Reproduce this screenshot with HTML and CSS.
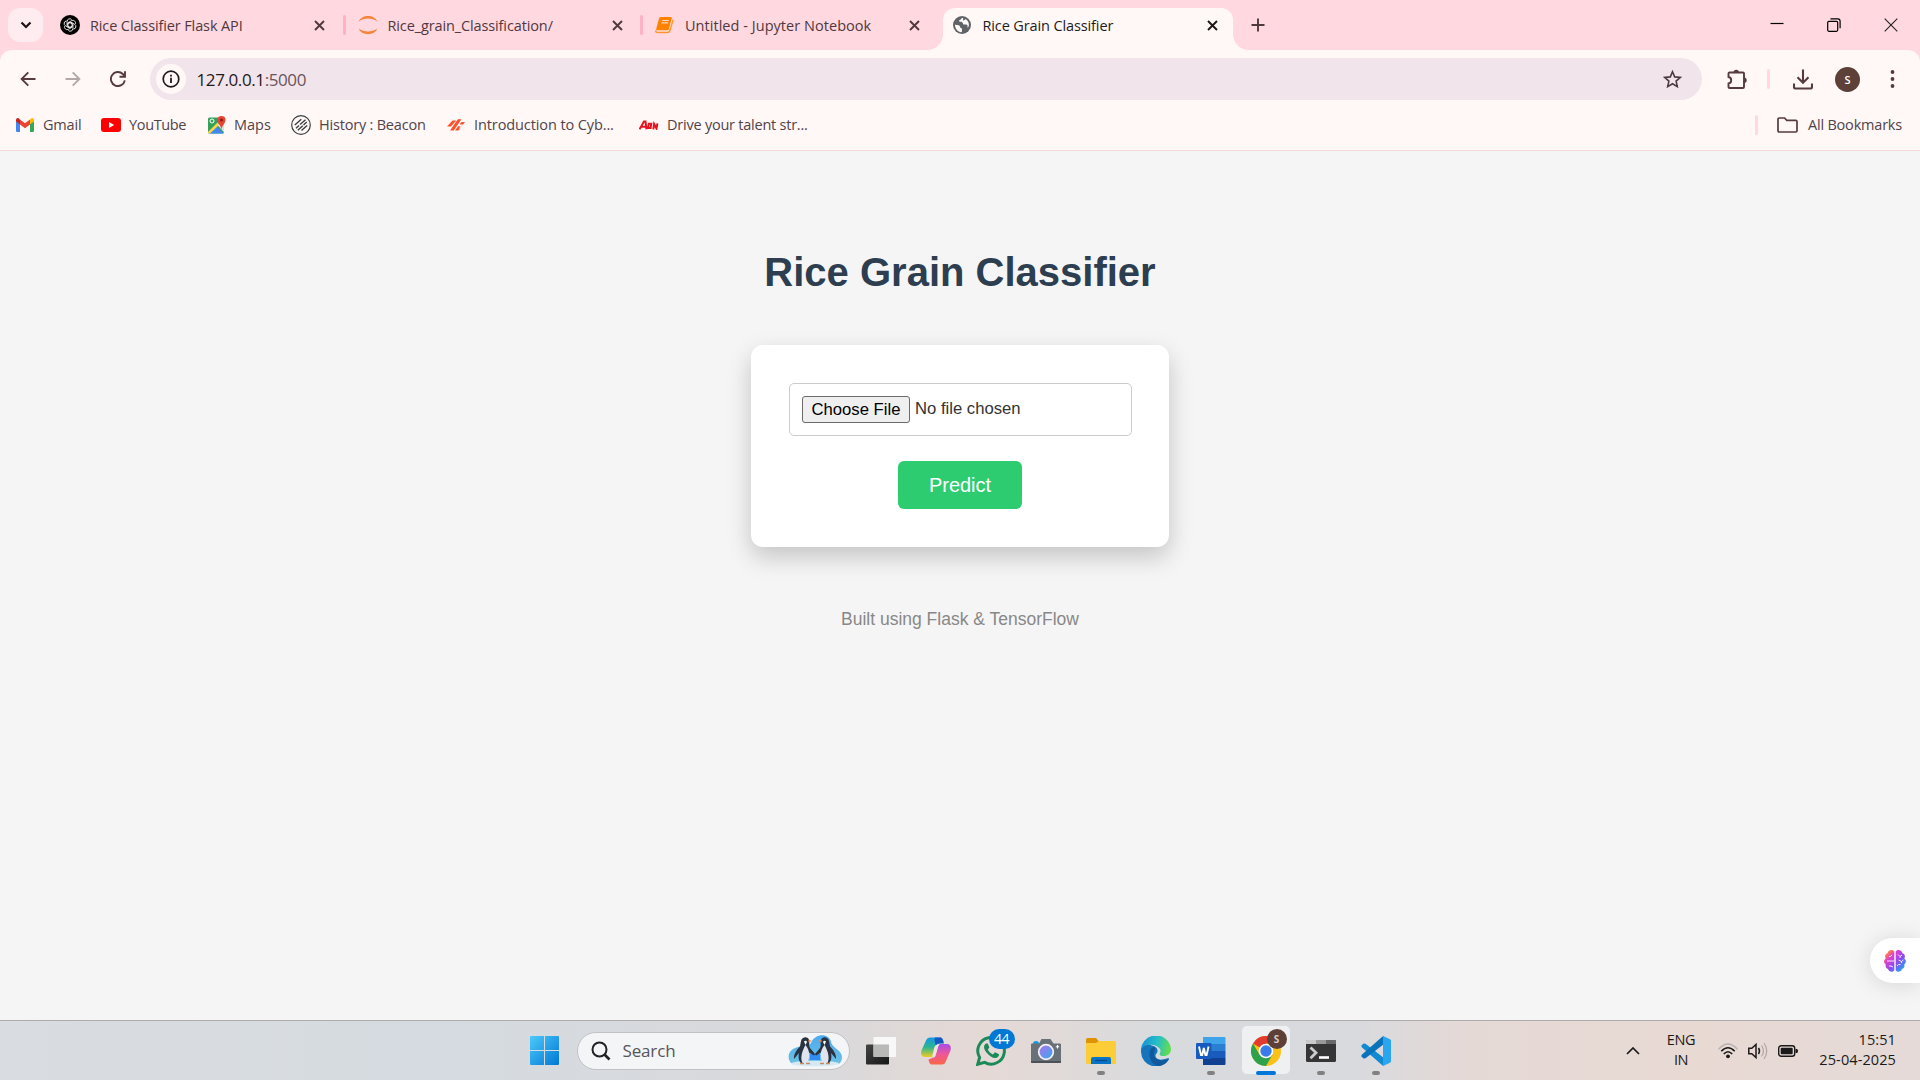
FILE: index.html
```html
<!DOCTYPE html>
<html lang="en">
<head>
<meta charset="utf-8">
<title>Rice Grain Classifier</title>
<link rel="stylesheet" href="styles.css">
</head>
<body>
<div class="screen">
  <header class="tabstrip">
    <div class="tab-search"><svg width="12" height="8" viewBox="0 0 12 8"><path d="M1.500 1.500 6 6l4.500-4.500" fill="none" stroke="#1f1416" stroke-width="2.200"/></svg></div>
    <div class="tab">
      <svg class="favicon" width="20" height="20" viewBox="0 0 20 20"><circle cx="10" cy="10" r="10" fill="#000"/><g fill="none" stroke="#fff" stroke-width=".8"><path id="petal" d="M8 12.500V7.800l3.600-2.100a2.600 2.600 0 0 1 3.700 3.300"/><use href="#petal" transform="rotate(60 10 10)"/><use href="#petal" transform="rotate(120 10 10)"/><use href="#petal" transform="rotate(180 10 10)"/><use href="#petal" transform="rotate(240 10 10)"/><use href="#petal" transform="rotate(300 10 10)"/></g></svg>
      <span class="tab-title t1">Rice Classifier Flask API</span>
      <svg class="close" width="11" height="11" viewBox="0 0 11 11"><path d="m1 1 9 9M10 1l-9 9"/></svg>
      <i class="sep"></i>
    </div>
    <div class="tab">
      <svg class="favicon" width="20" height="20" viewBox="0 0 20 20"><path d="M.8 6.500C3-1 17-1 19.200 6.500 15 2.600 5 2.600.8 6.500ZM.8 13.500C3 21 17 21 19.200 13.500 15 17.400 5 17.400.8 13.500Z" fill="#f5833a"/></svg>
      <span class="tab-title t2">Rice_grain_Classification/</span>
      <svg class="close" width="11" height="11" viewBox="0 0 11 11"><path d="m1 1 9 9M10 1l-9 9"/></svg>
      <i class="sep"></i>
    </div>
    <div class="tab">
      <svg class="favicon" width="20" height="20" viewBox="0 0 20 20"><path d="M5.500 2h10.300q1.300.2.900 1.800L14 14.200q-.5 1.300-1.800 1.300H2q-1.200-.3-.8-1.600L4 3.500Q4.400 2.200 5.500 2Z" fill="#ff8100"/><path d="M7.200 5.500h6.500M6.600 7.800h6.500" stroke="#ffd9c0" stroke-width="1.200"/><path d="M.8 15.500q0 2 1.600 2h10.400q1.500 0 2-1.700L18 4.800" fill="none" stroke="#ff9633" stroke-width="1.600"/><path d="M1.500 15.800h10.800q1.400 0 1.900-1.500L17 4" fill="none" stroke="#ffe0cc" stroke-width=".7"/></svg>
      <span class="tab-title t3">Untitled - Jupyter Notebook</span>
      <svg class="close" width="11" height="11" viewBox="0 0 11 11"><path d="m1 1 9 9M10 1l-9 9"/></svg>
    </div>
    <div class="tab active">
      <svg class="favicon" width="18" height="18" viewBox="0 0 18 18"><circle cx="9" cy="9" r="9" fill="#5f6368"/><path d="M2 8.500c1.500.8 3.500.2 4.500 1.200 1.200 1 .2 2 1.500 2.400 1 .4 1.300 1 .9 2.200v1.800C5 16.500 1.800 12.500 2 8.500ZM9.200 1.900c-1.300.6-1 1.400-2 1.800-1.200.5-1.300.9-.8 1.800.6.800 2.200.2 3 .9.900.8.300 1.700 1.400 2 1.200.4 2.600-.3 3.400.7.700.8.200 2.100.6 3C17.200 8.500 15.500 4.600 12.500 2.900c-.4 1.200-1.800 1-2.200 1.800-.9-.7.500-1.700-.3-2.800Z" fill="#fff8f7"/></svg>
      <span class="tab-title t4">Rice Grain Classifier</span>
      <svg class="close" width="11" height="11" viewBox="0 0 11 11"><path d="m1 1 9 9M10 1l-9 9"/></svg>
    </div>
    <svg class="newtab" width="14" height="14" viewBox="0 0 14 14"><path d="M7 .5v13M.5 7h13" stroke="#4f383e" stroke-width="1.900"/></svg>
    <div class="window-buttons">
      <svg width="14" height="14" viewBox="0 0 14 14"><path d="M.5 5.500h13" stroke="#000" stroke-width="1.200"/></svg>
      <svg width="14" height="14" viewBox="0 0 14 14" fill="none" stroke="#000" stroke-width="1.200"><rect x=".7" y="3.300" width="10" height="10" rx="1.200"/><path d="M3.500.9h7.300q2.300 0 2.300 2.300v7"/></svg>
      <svg width="14" height="14" viewBox="0 0 14 14"><path d="m.7.700 12.600 12.600M13.300.700.7 13.300" stroke="#222" stroke-width="1.100"/></svg>
    </div>
  </header>

  <div class="toolbar-back"><nav class="toolbar">
    <div class="nav-buttons">
      <svg width="16" height="16" viewBox="0 0 16 16"><path d="M15.500 8H2M8.300 1.300 1.600 8l6.700 6.700" fill="none" stroke="#573a41" stroke-width="1.900"/></svg>
      <svg width="16" height="16" viewBox="0 0 16 16"><path d="M.5 8H14M7.700 1.300 14.400 8l-6.700 6.700" fill="none" stroke="#b3a7a9" stroke-width="1.900"/></svg>
      <svg width="16" height="16" viewBox="0 0 16 16"><path d="M14.800 9.300A7 7 0 1 1 12.800 3l2.100 2.200M15 .3v5.400H9.500" fill="none" stroke="#573a41" stroke-width="1.900"/></svg>
    </div>
    <div class="omnibox">
      <div class="site-info"><svg width="18" height="18" viewBox="0 0 18 18"><circle cx="9" cy="9" r="7.800" fill="none" stroke="#1f1a1c" stroke-width="1.700"/><path d="M9 7.800V13M9 4.800v1.800" stroke="#1f1a1c" stroke-width="1.800"/></svg></div>
      <span class="url"><b>127.0.0.1</b>:5000</span>
      <svg class="star" width="19" height="18" viewBox="0 0 19 18"><path d="m9.500 1.700 2.200 5.200 5.600.5-4.200 3.700 1.200 5.500-4.800-2.900-4.800 2.900 1.200-5.500L1.700 7.400l5.600-.5Z" fill="none" stroke="#4b3b40" stroke-width="1.600"/></svg>
    </div>
    <svg class="ext" width="22" height="21" viewBox="0 0 22 21"><path d="M3.500 3.500H17q1 0 1 1V18q0 1-1 1H3.500q-1 0-1-1v-3.500q2.700-.3 2.700-3.200T2.500 8V4.500q0-1 1-1Z" fill="none" stroke="#573a41" stroke-width="1.900"/><path d="M7.500 3.500a2.700 2.700 0 0 1 5.400 0ZM18 8.500a2.700 2.700 0 0 1 0 5.400Z" fill="#573a41"/></svg>
    <i class="sep pale"></i>
    <svg class="download" width="20" height="21" viewBox="0 0 20 21" fill="none" stroke="#573a41" stroke-width="2.100"><path d="M10 .5v12.800M4.500 8.300l5.500 5.500 5.500-5.500M1 14.500v3.500q0 1.500 1.500 1.500h15q1.500 0 1.500-1.500v-3.500"/></svg>
    <div class="avatar">S</div>
    <svg class="dots" width="5" height="18" viewBox="0 0 5 18" fill="#573a41"><circle cx="2.500" cy="2" r="1.900"/><circle cx="2.500" cy="9" r="1.900"/><circle cx="2.500" cy="16" r="1.900"/></svg>
  </nav></div>

  <nav class="bookmarks">
    <div class="bm b1"><svg width="18" height="14" viewBox="0 0 18 14"><path d="M0 3v9.800Q0 14 1.200 14H4V5.500Z" fill="#4285f4"/><path d="M18 3v9.800q0 1.200-1.200 1.200H14V5.500Z" fill="#34a853"/><path d="M14 1.500V6.300L18 3.500V2q0-2-2-2-1 0-2 1.500Z" fill="#fbbc04"/><path d="M4 1.500 9 5.200l5-3.700v5L9 10.200l-5-3.700Z" fill="#ea4335"/><path d="M0 2v1.500l4 2.900V1.500Q3 0 2 0 0 0 0 2Z" fill="#c5221f"/></svg><span>Gmail</span></div>
    <div class="bm b2"><svg width="20" height="14" viewBox="0 0 20 14"><rect width="20" height="14" rx="3" fill="#f00"/><path d="M8 4v6l5.200-3Z" fill="#fff"/></svg><span>YouTube</span></div>
    <div class="bm b3"><svg width="18" height="18" viewBox="0 0 18 18"><rect y="1.500" width="16" height="16" rx="1.500" fill="#34a058"/><path d="m1 17.500 7.500-7.500 7 7.500Z" fill="#4285f4"/><path d="M0 16 9.500 6.500l2 2L2 17.500H1Q0 17 0 16Z" fill="#fdd445"/><path d="m9.500 9 6.500-4v11.500Z" fill="#ddd"/><circle cx="4" cy="5" r="2" fill="none" stroke="#fff"/><path d="M13.500 13.500C13 9 9.500 7.500 9.500 4a4 4 0 0 1 8 0c0 3.500-3.500 5-4 9.500Z" fill="#e94335"/><circle cx="13.500" cy="4" r="1.500" fill="#8c1c14"/></svg><span>Maps</span></div>
    <div class="bm b4"><svg width="20" height="20" viewBox="0 0 20 20" fill="none" stroke="#3b3f42"><circle cx="10" cy="10" r="9.300" stroke-width="1.200"/><path d="m3.800 10 6.500-5.800M5 13.200l3-2.700M9 9.600l5.500-4.900M6.800 15.300l5-4.500M12.500 10l3.200-2.900M10.500 15.500l5.600-5" stroke-width="1.400"/></svg><span>History : Beacon</span></div>
    <div class="bm b5"><svg width="18" height="12" viewBox="0 0 18 12" fill="#f9532d"><path d="M0 7.500 5.500 1.500h3.800L4 7.500ZM3 11.500 10.800.3h3.700L6.700 11.500ZM8 11.500l3-4.200h2.500l-1.500 2.200h.8l3.200-4H12.500l2-2.500H18L11.500 11.500Z"/></svg><span>Introduction to Cyb...</span></div>
    <div class="bm b6"><svg width="20" height="10" viewBox="0 0 20 10" fill="none" stroke="#e3131f" stroke-width="2"><path d="M.5 9.300 5 1.500h1.500l1 7.800M2.500 6.800h5M9.800 3.800h2.500l-.7 4.200H9ZM14.300 9.300l.8-5.300 2.400 4.500.9-5.200"/></svg><span>Drive your talent str...</span></div>
    <i class="sep pale"></i>
    <div class="bm all"><svg width="21" height="16" viewBox="0 0 21 16"><path d="M1 2.200Q1 1 2.200 1h5.300l2.300 2.300h9Q20 3.300 20 4.500v9.300q0 1.200-1.200 1.200H2.200Q1 15 1 13.800Z" fill="none" stroke="#573a41" stroke-width="1.700"/></svg><span>All Bookmarks</span></div>
  </nav>

  <main class="page">
    <h1>Rice Grain Classifier</h1>
    <form class="card" onsubmit="return false">
      <div class="file-input"><button type="button" class="choose">Choose File</button><span>No file chosen</span></div>
      <button class="predict">Predict</button>
    </form>
    <footer>Built using Flask &amp; TensorFlow</footer>
    <div class="assistant"><svg width="24" height="24" viewBox="0 0 24 24"><defs><linearGradient id="br" x1="0" y1="0" x2="1" y2="1"><stop offset="0" stop-color="#ffb01f"/><stop offset=".12" stop-color="#ff8a3c"/><stop offset=".32" stop-color="#e03ed0"/><stop offset=".58" stop-color="#8a4df0"/><stop offset=".9" stop-color="#1fa8f5"/></linearGradient></defs><path d="M11.300 2.500C9-.2 5 1.200 4.500 4.300 2 5 1.500 8 2.700 9.400c-2.300 1.800-2 4.600 0 5.600C2 18 3.500 19.500 5 20c1 3.200 4.500 3.500 6.300 1.500ZM12.700 2.500C15-.2 19 1.200 19.500 4.300 22 5 22.500 8 21.300 9.400c2.300 1.800 2 4.600 0 5.600.7 3-.8 4.500-2.300 5-1 3.200-4.500 3.500-6.300 1.500Z" fill="url(#br)"/><path d="M4 12h7M6 7.500q2 .5 3-1.500M6 17q2-.5 4 1M14 17q1-2 3.500-1.500M15 5.500l2 2 2-1.500M17 7.500V9M15.500 11l3 1.500 2-1.500M18.500 12.500V14" fill="none" stroke="#f7e9ff" stroke-width="1"/></svg></div>
  </main>

  <footer class="taskbar">
    <div class="apps">
      <div class="app start"><svg width="29" height="29" viewBox="0 0 29 29"><defs><linearGradient id="wn" x1="0" y1="0" x2="1" y2="1"><stop offset="0" stop-color="#4cc9fb"/><stop offset="1" stop-color="#0078d4"/></linearGradient></defs><path d="M1 0h13v14H0V1Q0 0 1 0ZM15 0h13q1 0 1 1v13H15ZM0 15h14v14H1q-1 0-1-1ZM15 15h14v13q0 1-1 1H15Z" fill="url(#wn)"/></svg></div>
      <div class="search">
        <svg width="20" height="20" viewBox="0 0 20 20" fill="none" stroke="#222"><circle cx="8.500" cy="8.500" r="7" stroke-width="2"/><path d="m13.500 13.500 5 5" stroke-width="2.600"/></svg>
        <span>Search</span>
        <svg class="penguins" width="54" height="32" viewBox="0 0 54 32"><defs><linearGradient id="pg" x1="0" y1="0" x2="0" y2="1"><stop offset="0" stop-color="#4cabf2"/><stop offset="1" stop-color="#6cc0e4"/></linearGradient></defs><path d="M3 28C-2 22 1 14 10 12 14 10 20 13 23 8 27-2 41-2 43 7c1 4 5 6 8 9 4 4 4 9 0 13Z" fill="url(#pg)"/><path d="M22 19h10v6H22Z" fill="#2e8cf4"/><ellipse cx="27" cy="28.500" rx="24" ry="2.800" fill="#d3eaf5"/><g id="peng"><path d="M13 6c1-4 6-5 8-1.500C22 8 20.500 10 22 13l5 6-1 1.500-5-3c.5 5-1 8.500-3.500 10.500H13c-2-2-3-5-2-10l-5 6C5.500 18.500 9.500 14 12 11.500Z" fill="#2a3342"/><path d="M17.500 10c3 4 4.500 8 3.500 13-.5 3-1.500 4.500-3 5h-3.500c-2.500-5-.5-12 3-18Z" fill="#dfe4ee"/><path d="M16 6.500q2-1.500 3 .5L17.500 10Z" fill="#fff"/><path d="m20.500 4.500 3.500 1.500-3.500 1.300Z" fill="#e88b4e"/><path d="M12 28.500h4M18 28.500h4" stroke="#c98a60" stroke-width="1.400"/></g><use href="#peng" transform="matrix(-1 0 0 1 54 0)"/></svg>
      </div>
      <div class="app tv"><svg width="30" height="30" viewBox="0 0 30 30"><defs><linearGradient id="tk" x1="0" y1="0" x2="1" y2="1"><stop offset="0" stop-color="#444"/><stop offset="1" stop-color="#161616"/></linearGradient></defs><rect y="8.500" width="23" height="20" rx="1" fill="url(#tk)"/><rect x="7.500" y="1" width="22.500" height="20" rx="1" fill="#fbfbfb" opacity=".92"/><path d="M7.500 8.500H23V21H7.500Z" fill="#b9b9b8"/></svg></div>
      <div class="app"><svg width="30" height="30" viewBox="0 0 30 30"><defs><linearGradient id="c1" x1="0" y1="0" x2="0" y2="1"><stop offset="0" stop-color="#1597e8"/><stop offset=".5" stop-color="#2cb68d"/><stop offset="1" stop-color="#f0cc22"/></linearGradient><linearGradient id="c2" x1="0" y1="0" x2="0" y2="1"><stop offset="0" stop-color="#a84be8"/><stop offset=".5" stop-color="#ee5898"/><stop offset="1" stop-color="#fa6848"/></linearGradient></defs><path d="M9 1.500h10c2 0 3 2 3.500 4.500L15 9c-1.500 6-2 11-4 12H4c-3.500 0-4.500-3-3.500-6.500L5 4.500C6 2.500 7 1.500 9 1.500Z" fill="url(#c1)"/><path d="M14 1.500h5c2.500 0 3 2.500 4 6h-5c-2 0-2 1-3 3-1-4-2-8-1-9Z" fill="#1557c5"/><path d="M21 28.500H11c-2 0-3-2-3.500-5L14 21c2-6 2-11 5-13h7c3.500 0 4.500 3 3.500 6.500L25 25c-1 2.500-2 3.500-4 3.500Z" fill="url(#c2)"/><path d="M13.500 11c1-2 2-2.500 4.500-2.500-1.500 3-2 8-4 12h-3c1.500-4 1.500-7 2.500-9.500Z" fill="#eee4e3"/></svg></div>
      <div class="app"><svg width="30" height="30" viewBox="0 0 30 30"><path d="m1.700 28.300 1.900-6.800a13.300 13.300 0 1 1 5 4.900Z" fill="none" stroke="#1c8a58" stroke-width="3"/><path d="M10 7.500c-3 2-2.200 5.500.5 9 3 3.800 6.500 6 9.500 5.500 2.500-.8 3.200-2.600 3-3.700l-4-2-2.200 2.200c-2-.8-4-2.700-5-4.900l1.600-2-1.600-4Z" fill="#1c8a58"/></svg><span class="badge">44</span></div>
      <div class="app"><svg width="30" height="30" viewBox="0 0 30 30"><defs><linearGradient id="cm" x1="0" y1="0" x2="1" y2="1"><stop offset="0" stop-color="#b372e8"/><stop offset="1" stop-color="#30aaf2"/></linearGradient></defs><path d="M2 8q0-3 3-3t3 3Z" fill="#1499dc"/><path d="M8 7.500 10.500 3h9l3 4.500H29q1 0 1 1V26q0 1-1 1H1q-1 0-1-1V8.500q0-1 1-1Z" fill="#687078"/><path d="M0 25h30v1q0 1-1 1H1q-1 0-1-1Z" fill="#4b5157"/><circle cx="15" cy="16" r="7.300" fill="url(#cm)" stroke="#f3f0fa" stroke-width="1.700"/><path d="M26.500 9v3.400M24.800 10.700h3.400" stroke="#fff" stroke-width="1.100"/></svg></div>
      <div class="app running"><svg width="30" height="30" viewBox="0 0 30 30"><path d="M0 3.500Q0 2 1.500 2H10l3 3.500V9H0Z" fill="#dd9400"/><path d="M0 7h10l3-2h15.500Q30 5 30 6.500v20q0 1.500-1.500 1.500h-27Q0 28 0 26.500Z" fill="#fdcd38"/><path d="M5 28v-5q0-2 2-2h16q2 0 2 2v5Z" fill="#0874c6"/><path d="M9 24.500h12" stroke="#054e94" stroke-width="1.500"/></svg></div>
      <div class="app"><svg width="30" height="30" viewBox="0 0 30 30"><defs><linearGradient id="eg" x1="0" y1=".2" x2="1" y2=".4"><stop offset="0" stop-color="#168ed4"/><stop offset=".55" stop-color="#27bfc7"/><stop offset="1" stop-color="#62dc50"/></linearGradient></defs><path d="M0 16A15 15 0 0 1 30 13c0 5-4 7.500-8 7-3 0-4-1.300-3-3 1-2 .5-4-1-5C12 6 2 9 0 16Z" fill="url(#eg)"/><path d="M0 16C0 10 6 8 11 9.500c5 1 7 5 4.500 8-3 3 1 7 6 6 4-.8 7-2 6.500-.5A15 15 0 0 1 0 16Z" fill="#1574bb"/><path d="M12 11C6 14 8 28 17 30c5 0 9-3 11-7-7 3-14 1-15-4-.5-3 1-5 1.500-7Z" fill="#10599c"/></svg></div>
      <div class="app running"><svg width="30" height="30" viewBox="0 0 30 30"><path d="M7 1h21.500q1 0 1 1v6H7Z" fill="#40a4ea"/><path d="M7 8h22.500v7H7Z" fill="#2b7fd3"/><path d="M7 15h22.500v7H7Z" fill="#195abd"/><path d="M7 22h22.500v6q0 1-1 1H7Z" fill="#113f92"/><rect y="7" width="15.500" height="16" rx="1" fill="#185abd"/><path d="m3 10.500 2 8.500h1.200l1.600-7 1.600 7h1.200l2-8.500" fill="none" stroke="#fff" stroke-width="1.900"/></svg></div>
      <div class="app current"><svg width="30" height="30" viewBox="0 0 30 30"><circle cx="15" cy="15" r="15" fill="#fbc116"/><path d="M15 15 2 7.500A15 15 0 0 1 28 7.500H15Z" fill="#e33b2e"/><path d="M2 7.500A15 15 0 0 0 15 30l6.500-11.300L15 15 8.500 18.700Z" fill="#2da14c"/><circle cx="15" cy="15" r="7.300" fill="#fff"/><circle cx="15" cy="15" r="5.700" fill="#387cea"/></svg><span class="profile">S</span></div>
      <div class="app running"><svg width="30" height="30" viewBox="0 0 30 30"><rect y="4" width="30" height="22" rx="1.500" fill="#353535"/><path d="M1 4h9v4H0V5q0-1 1-1Z" fill="#c9c9c9"/><path d="M10 4h10v4H10Z" fill="#999"/><path d="M20 4h9q1 0 1 1v3H20Z" fill="#686868"/><path d="m4.500 11.500 5.500 5.300-5.500 5.400" fill="none" stroke="#ccc" stroke-width="2.800"/><path d="M13 21.500h10" stroke="#fff" stroke-width="2.600"/></svg></div>
      <div class="app running"><svg width="30" height="30" viewBox="0 0 30 30"><path d="M.5 9.500 2.500 7.500 4.500 7.700 23 22v7.500L21.500 29.500.5 11Z" fill="#118ad4"/><path d="M.5 20.500 2.500 22.500 4.500 22.300 23 8V.500H21.500L.5 19Z" fill="#0873bb"/><path d="m22 0 7 3.300q1 .5 1 1.700v20q0 1.200-1 1.700L22 30Z" fill="#2aa5f0"/></svg></div>
    </div>
    <div class="tray">
      <svg class="chev" width="14" height="8" viewBox="0 0 14 8"><path d="m1 7 6-6 6 6" fill="none" stroke="#1a1a1a" stroke-width="1.700"/></svg>
      <div class="lang">ENG<br>IN</div>
      <svg class="wifi" width="20" height="16" viewBox="0 0 20 16" fill="none" stroke="#1a1a1a" stroke-width="1.600"><path d="M.6 6.300q9.400-10.600 18.800 0" stroke="#b9b0ae" stroke-width="1.300"/><path d="M3.300 8.300q6.700-7 13.400 0M5.800 11q4.200-4.500 8.400 0"/><circle cx="10" cy="13.300" r="1.900" fill="#1a1a1a" stroke="none"/></svg>
      <svg class="vol" width="20" height="18" viewBox="0 0 20 18" fill="none" stroke="#1a1a1a" stroke-width="1.500"><path d="M.8 6.200h3L8 2.500v13l-4.200-3.700h-3Z"/><path d="M10.500 6q2 3 0 6"/><path d="M13.500 3.500q4 5.500 0 11M16 1q5.500 8 0 16" stroke="#b0a7a5" stroke-width="1.200"/></svg>
      <svg class="bat" width="20" height="12" viewBox="0 0 20 12"><rect x=".7" y=".7" width="16" height="10.600" rx="2.500" fill="none" stroke="#1a1a1a" stroke-width="1.400"/><rect x="2.700" y="2.700" width="12" height="6.600" rx="1" fill="#1a1a1a"/><path d="M17.500 4h1.300q1.200 0 1.200 2t-1.200 2h-1.300Z" fill="#1a1a1a"/></svg>
      <div class="clock">15:51<br>25-04-2025</div>
    </div>
  </footer>
</div>
</body>
</html>
```
FILE: styles.css
```css
* { box-sizing: border-box; }
body { margin: 0; overflow: hidden; font-family: "Open Sans", "Noto Sans", sans-serif; }
svg { display: block; flex: none; }
button { font-family: inherit; }
.screen { width: 1920px; height: 1080px; display: flex; flex-direction: column; background: #f5f5f5; }

.tabstrip { height: 50px; flex: none; display: flex; background: #ffd8e0; font-size: 14.500px; color: #51383e; }
.tab-search { width: 35px; height: 34px; margin: 8px 5px 0 8px; border-radius: 12px; background: #ffecf0; display: grid; place-items: center; }
.tab { position: relative; width: 297.500px; flex: none; height: 50px; display: flex; align-items: center; padding-left: 12px; }
.favicon { width: 20px; margin-right: 10px; }
.tab-title { width: 224px; white-space: nowrap; line-height: 20px; padding-top: 1px; letter-spacing: -.12px; }
.t3 { letter-spacing: .04px; }
.close { stroke: #51383e; stroke-width: 1.900; }
.sep { width: 3px; height: 20px; border-radius: 2px; background: #ffb1c5; flex: none; }
.tab .sep { margin-left: auto; margin-right: 0; }
.tab.active { width: 290px; height: 42px; margin: 8px 0 0 2px; padding: 0 0 8px 10px; background: #fff8f7; border-radius: 12px 12px 0 0; color: #1f1a1c; }
.tab.active .favicon { width: 18px; margin-right: 12px; }
.tab.active .tab-title { width: 224px; }
.tab.active .close { stroke: #1f1416; }
.tab.active::before, .tab.active::after { content: ""; position: absolute; bottom: 0; width: 15px; height: 15px; }
.tab.active::before { left: -15px; background: radial-gradient(circle at 0 0, transparent 14.500px, #fff8f7 15px); }
.tab.active::after { right: -15px; background: radial-gradient(circle at 100% 0, transparent 14.500px, #fff8f7 15px); }
.newtab { margin: 18px 0 0 18px; }
.window-buttons { margin: 18px 22px 0 auto; display: flex; gap: 43px; }

.toolbar-back { background: #ffd8e0; flex: none; }
.toolbar { height: 58px; display: flex; align-items: center; background: #fff8f7; border-radius: 12px 12px 0 0; }
.nav-buttons { width: 150px; display: flex; gap: 29px; padding-left: 20px; }
.omnibox { width: 1552px; height: 42px; border-radius: 21px; background: #f1e4eb; display: flex; align-items: center; padding: 0 20px 0 6px; }
.site-info { width: 30px; height: 30px; border-radius: 50%; background: #fff8f7; display: grid; place-items: center; }
.url { margin-left: 10.500px; font-size: 17px; color: #6a555b; white-space: nowrap; letter-spacing: -.4px; }
.url b { font-weight: 400; color: #1f1a1c; }
.star { margin-left: auto; }
.ext { margin-left: 24px; }
.sep.pale { background: #ffd8e0; }
.toolbar .sep { margin: 0 22.500px 0 19px; }
.avatar { width: 25px; height: 25px; margin-left: 22.500px; border-radius: 50%; background: #5d4037; color: #fff; font: 600 11px/25px "Open Sans", sans-serif; text-align: center; }
.dots { margin-left: 30px; }

.bookmarks { height: 43px; flex: none; display: flex; align-items: center; background: #fff8f7; border-bottom: 1px solid #f6d9dc; padding: 0 18px 9px 16px; font-size: 14.500px; color: #51434a; letter-spacing: -.2px; }
.bm { display: flex; align-items: center; gap: 8px; white-space: nowrap; line-height: 20px; flex: none; }
.b1 { width: 85px; }
.b2 { width: 107px; letter-spacing: -.35px; }
.b3 { width: 83px; letter-spacing: 0; }
.b4 { width: 156px; }
.b5 { width: 192px; letter-spacing: -.1px; }
.b5 span { margin-left: 1px; }
.b6 { letter-spacing: -.23px; }
.b1 span { margin-left: 1px; }
.bookmarks .sep { margin-left: auto; }
.all { margin-left: 19px; gap: 10px; }

.page { position: relative; height: 869px; display: flex; flex-direction: column; align-items: center; font-family: "Liberation Sans", Arial, sans-serif; color: #333; }
h1 { margin: 98px 0 0; font-size: 40px; line-height: 46px; color: #2c3e50; }
.card { width: 418px; height: 202px; margin-top: 50px; padding: 38px 37px 0 37px; border-radius: 12px; background: #fff; box-shadow: 0 10px 25px rgba(0,0,0,.2); display: flex; flex-direction: column; align-items: center; }
.file-input { width: 343px; height: 53px; margin-left: 1px; border: 1px solid #ccc; border-radius: 5px; display: flex; align-items: center; padding-left: 12px; font-size: 16.670px; }
.choose { width: 108px; height: 27px; padding: 0; border: 1px solid #6b6b6b; border-radius: 3px; background: #efefef; color: #000; font-size: 16.670px; }
.file-input span { margin: -2px 0 0 5px; }
.predict { width: 124px; height: 48px; margin-top: 25px; border: 0; border-radius: 6px; background: #2ecc71; color: #fff; font-size: 20px; }
.page footer { margin-top: 62px; font-size: 17.500px; line-height: 21px; color: #888; }
.assistant { position: absolute; right: 0; top: 787px; width: 50px; height: 45px; border-radius: 23px 0 0 23px; background: #fff; box-shadow: 0 2px 22px rgba(0,0,0,.13); display: flex; align-items: center; padding-left: 13px; }

.taskbar { height: 60px; flex: none; display: flex; justify-content: space-between; border-top: 1px solid #aeabad; background: linear-gradient(90deg, #d9dce0 0, #d5dbe0 450px, #dad9db 830px, #e5d9d6 980px, #e0dad9 1070px, #d8dbde 1160px, #d8dade 1350px, #e5d9d6 1470px, #e8d9d3 1700px, #e5dad8 1920px); }
.apps { display: flex; align-items: center; padding-left: 517px; }
.app { position: relative; width: 55px; height: 59px; display: grid; place-items: center; }
.tv { margin-left: 3.500px; }
.search { width: 273px; height: 38px; margin-left: 4.500px; border-radius: 19px; border: 1px solid #c2c2c6; background: #f4f5f6; display: flex; align-items: center; padding: 0 7px 0 13px; color: #55565a; font-size: 17px; letter-spacing: -.15px; }
.search span { margin-left: 12px; margin-top: -1px; }
.penguins { margin-left: auto; }
.running::after, .current::after { content: ""; position: absolute; top: 50px; left: 23.500px; width: 8px; height: 4px; border-radius: 2px; background: #818181; }
.current::before { content: ""; position: absolute; left: 3.500px; top: 5px; width: 48px; height: 48px; border-radius: 5px; background: #eff0f2; }
.current svg { position: relative; }
.current::after { left: 17.500px; width: 20px; background: #0078d7; }
.badge { position: absolute; left: 25.500px; top: 8px; width: 26px; height: 20px; border-radius: 10px; background: #0078d4; color: #fff; font-size: 14px; line-height: 20px; text-align: center; letter-spacing: -.6px; }
.profile { position: absolute; left: 28.500px; top: 8px; width: 20px; height: 20px; border-radius: 50%; background: #5d4037; color: #d9cbc6; font-size: 10px; font-weight: 700; line-height: 20px; text-align: center; }
.tray { display: flex; align-items: center; padding-right: 24px; font-size: 14.500px; line-height: 20px; color: #1a1a1a; }
.lang { width: 40px; margin: -2px 0 0 21px; text-align: center; letter-spacing: -.4px; }
.wifi { margin-left: 17px; }
.vol { margin-left: 10px; }
.bat { margin-left: 10px; }
.clock { width: 98px; margin-top: -2px; text-align: right; letter-spacing: .1px; }
```
